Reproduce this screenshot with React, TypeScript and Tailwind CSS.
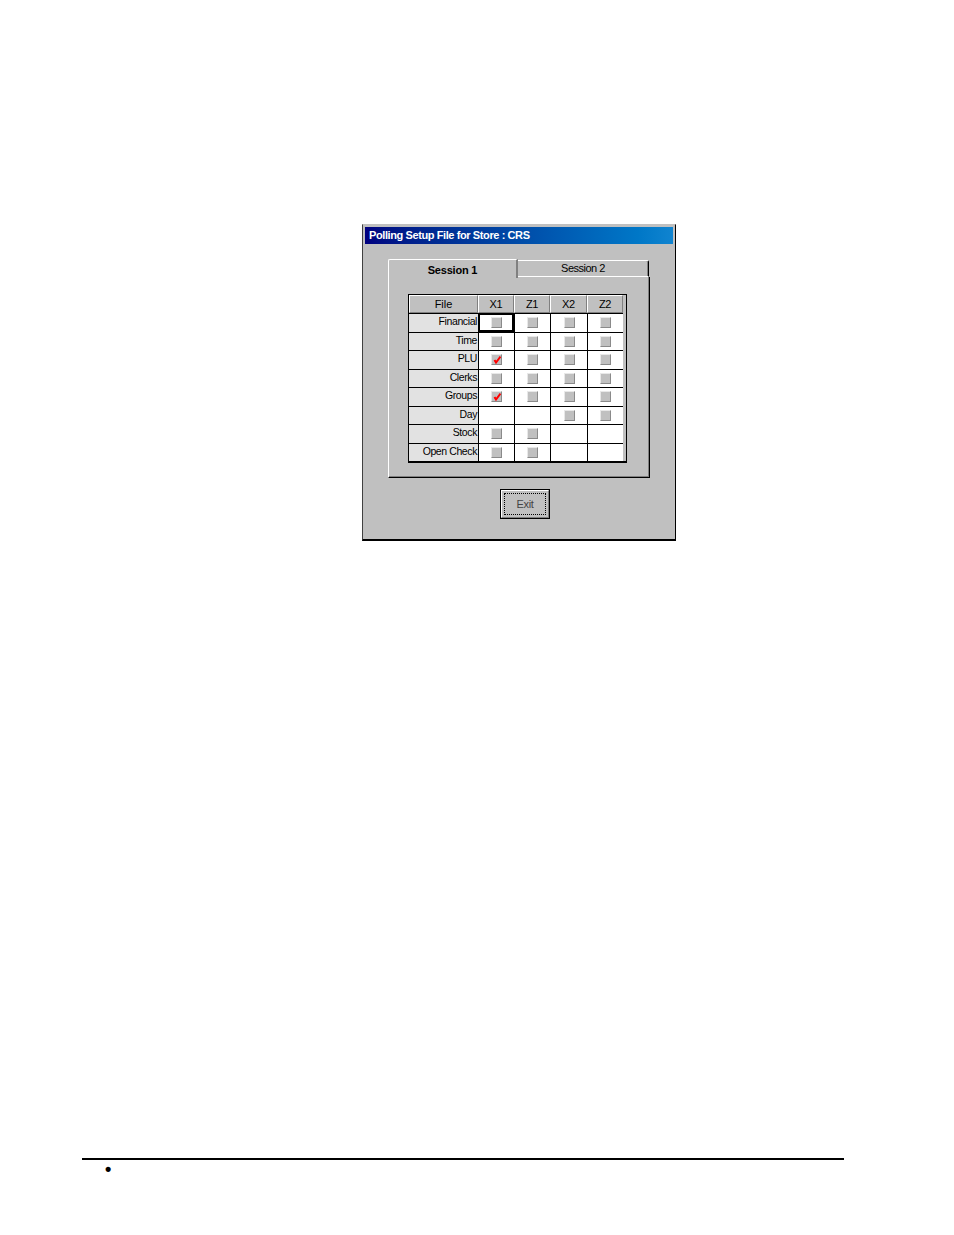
import React from 'react';

const cols = ['X1', 'Z1', 'X2', 'Z2'];

// null = no checkbox in that cell, true = ticked
const rows: { name: string; cells: (boolean | null)[] }[] = [
  { name: 'Financial', cells: [false, false, false, false] },
  { name: 'Time', cells: [false, false, false, false] },
  { name: 'PLU', cells: [true, false, false, false] },
  { name: 'Clerks', cells: [false, false, false, false] },
  { name: 'Groups', cells: [true, false, false, false] },
  { name: 'Day', cells: [null, null, false, false] },
  { name: 'Stock', cells: [false, false, null, null] },
  { name: 'Open Check', cells: [false, false, null, null] },
];

function Check({ on }: { on: boolean }) {
  return (
    <div className="relative w-[11px] h-[11px] bg-[#c0c0c0] border border-t-[#e8e8e8] border-l-[#e8e8e8] border-r-[#8a8a8a] border-b-[#8a8a8a] overflow-hidden">
      {on && (
        <svg className="absolute left-0 top-0" width="9" height="9" viewBox="0 0 9 9">
          <path d="M2.5 5 L4 7.5 L8.5 1.5" stroke="#ff0000" strokeWidth="2" fill="none" />
        </svg>
      )}
    </div>
  );
}

export default function App() {
  return (
    <div className="relative min-h-[1235px] bg-white font-['Liberation_Sans',Arial,sans-serif] text-black">
      <div className="pt-[224px] pl-[362px]">
        <div className="w-[314px] h-[317px] bg-[#c0c0c0] border-l border-r border-b-2 border-t border-l-[#404040] border-r-black border-b-black border-t-[#c0c0c0] px-[2px] pt-[2px]">
          <div className="h-[17px] bg-gradient-to-r from-[#000080] to-[#1084d0] text-white font-bold text-[11px] leading-[17px] pl-[4px] tracking-[-0.4px]">
            Polling Setup File for Store : CRS
          </div>

          {/* tabs */}
          <div className="ml-[23px] mt-[14px] w-[262px]">
            <div className="flex h-[19px] items-end">
              <div className="relative z-10 w-[130px] h-[19px] bg-[#c0c0c0] border-t border-l border-white border-r-2 border-r-[#808080] rounded-tl-[2px] text-center font-bold text-[11px] leading-[20px] tracking-[-0.2px] translate-y-[1px]">
                Session 1
              </div>
              <div className="w-[131px] h-[17px] bg-[#c0c0c0] border-t border-white border-r border-r-black shadow-[inset_-1px_0_0_#808080] rounded-tr-[2px] text-center text-[11px] leading-[15px] tracking-[-0.5px] border-b border-b-white">
                Session 2
              </div>
            </div>
            <div className="h-[201px] bg-[#c0c0c0] border-l border-l-white border-r border-r-black border-b border-b-black shadow-[inset_-1px_-1px_0_#808080] pl-[19px] pt-[17px]">
              <div className="w-[219px] h-[169px] bg-[#c0c0c0] border border-black border-b-2">
                <div className="grid grid-cols-[69px_36px_36px_37px_36px]">
                  <div className="h-[18px] border-t border-l border-white border-r border-b border-r-[#808080] border-b-[#808080] text-[11px] leading-[16px] text-center">
                    File
                  </div>
                  {cols.map((c) => (
                    <div key={c} className="h-[18px] border-t border-l border-white border-r border-b border-r-[#808080] border-b-[#808080] text-[11px] leading-[16px] text-center tracking-[-0.3px]">
                      {c}
                    </div>
                  ))}
                  {rows.map((r, ri) => (
                    <React.Fragment key={r.name}>
                      <div className="h-[18.5px] bg-[#e2e2e2] border-t border-black text-[10.5px] leading-[14px] text-right pr-[1px] tracking-[-0.4px]">
                        {r.name}
                      </div>
                      {r.cells.map((v, ci) => (
                        <div
                          key={ci}
                          className={
                            ri === 0 && ci === 0
                              ? 'h-[18.5px] bg-white border-2 border-black flex items-center justify-center'
                              : 'h-[18.5px] bg-white border-t border-l border-black flex items-center justify-center'
                          }
                        >
                          {v !== null && <Check on={v} />}
                        </div>
                      ))}
                    </React.Fragment>
                  ))}
                </div>
              </div>
            </div>
          </div>

          {/* exit button */}
          <div className="mt-[11px] flex justify-center pl-[12px]">
            <div className="w-[50px] h-[30px] border border-black">
              <div className="w-full h-full border border-t-white border-l-white border-r-[#808080] border-b-[#808080] p-[2px]">
                <div className="w-full h-full border border-dotted border-black text-[11px] leading-[20px] text-center text-[#444] tracking-[-0.3px]">
                  Exit
                </div>
              </div>
            </div>
          </div>
        </div>
      </div>

      <div className="absolute left-[82px] top-[1158px] w-[762px] h-[2px] bg-black" />
      <div className="absolute left-[105px] top-[1158px] text-[18px] leading-[22px] font-bold">•</div>
    </div>
  );
}
